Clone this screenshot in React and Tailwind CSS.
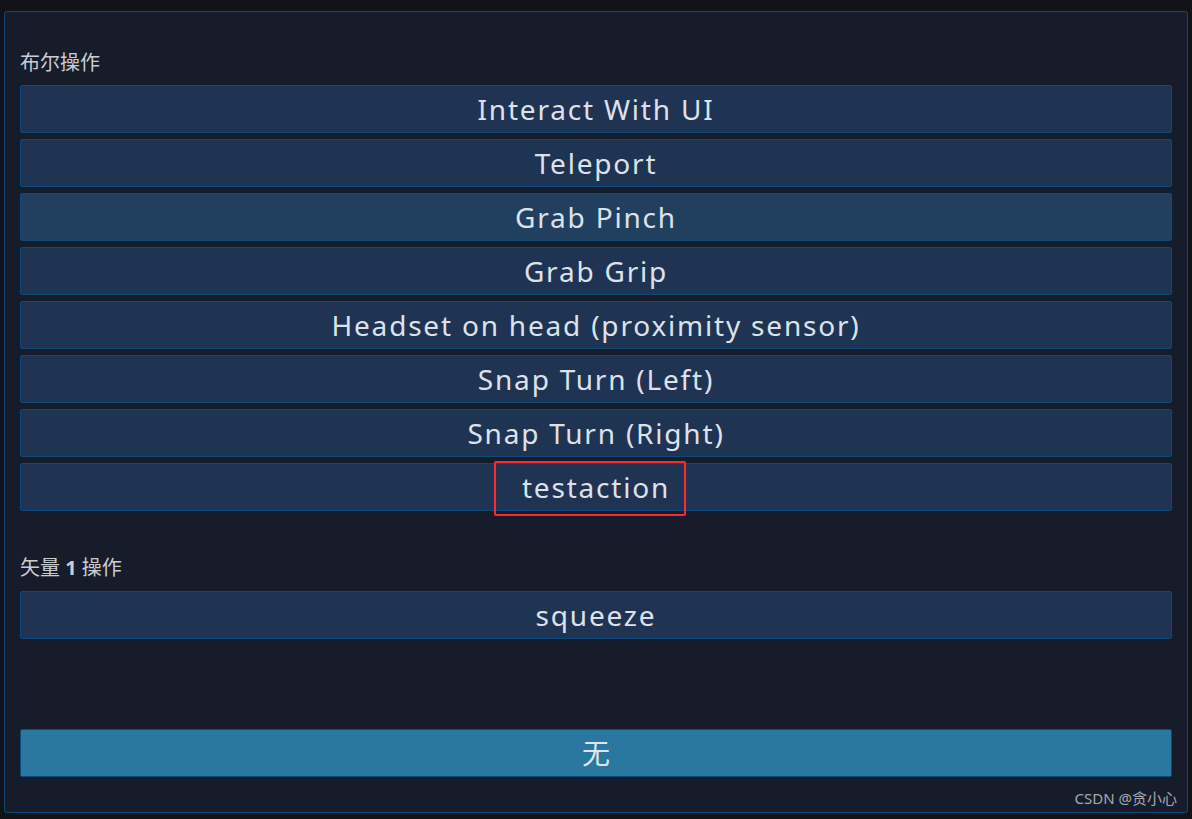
import React from 'react';

const boolActions = [
  'Interact With UI',
  'Teleport',
  'Grab Pinch',
  'Grab Grip',
  'Headset on head (proximity sensor)',
  'Snap Turn (Left)',
  'Snap Turn (Right)',
  'testaction',
];

const font = { fontFamily: '"Noto Sans", "Noto Sans CJK SC", sans-serif' };

const ActionButton = ({ label, active, boxed }) => (
  <div
    className={`h-[48px] flex items-center justify-center rounded-[2px] border border-[#0c4a7c] text-[28px] tracking-[1.8px] text-[#dde2ea] ${
      active ? 'bg-[#21405f]' : 'bg-[#1f3352]'
    }`}
  >
    <span className="relative leading-none">
      {label}
      {boxed && (
        <span className="absolute -left-[28px] -right-[16px] -top-[12px] -bottom-[15px] border-2 border-[#ff2a2a] rounded-[2px]" />
      )}
    </span>
  </div>
);

const App = () => {
  return (
    <div className="relative w-[1192px] h-[819px] bg-[#111318] overflow-hidden pl-[4px] pt-[11px]" style={font}>
      <div className="w-[1184px] h-[802px] flex flex-col bg-[#171c2a] border border-[#0e4a7a] rounded-[3px] px-[15px] pt-[39px]">
        <div className="text-[20px] leading-[24px] text-[#c9cdd4] mb-[10px]">布尔操作</div>
        <div className="flex flex-col gap-[6px]">
          {boolActions.map((a) => (
            <ActionButton key={a} label={a} active={a === 'Grab Pinch'} boxed={a === 'testaction'} />
          ))}
        </div>

        <div className="mt-[45px] text-[20px] leading-[24px] text-[#c9cdd4] mb-[11px] whitespace-pre">
          矢量 <span className="font-bold">1</span> 操作
        </div>
        <ActionButton label="squeeze" />

        <div className="mt-[90px] h-[48px] flex items-center justify-center rounded-[2px] border border-[#0c4a7c] bg-[#2a779f] text-[28px] text-[#dde6ee]">
          无
        </div>
      </div>
      <div className="absolute right-[15px] bottom-[10px] text-[15px] text-[#a4a9b1]">CSDN @贪小心</div>
    </div>
  );
};

export default App;
